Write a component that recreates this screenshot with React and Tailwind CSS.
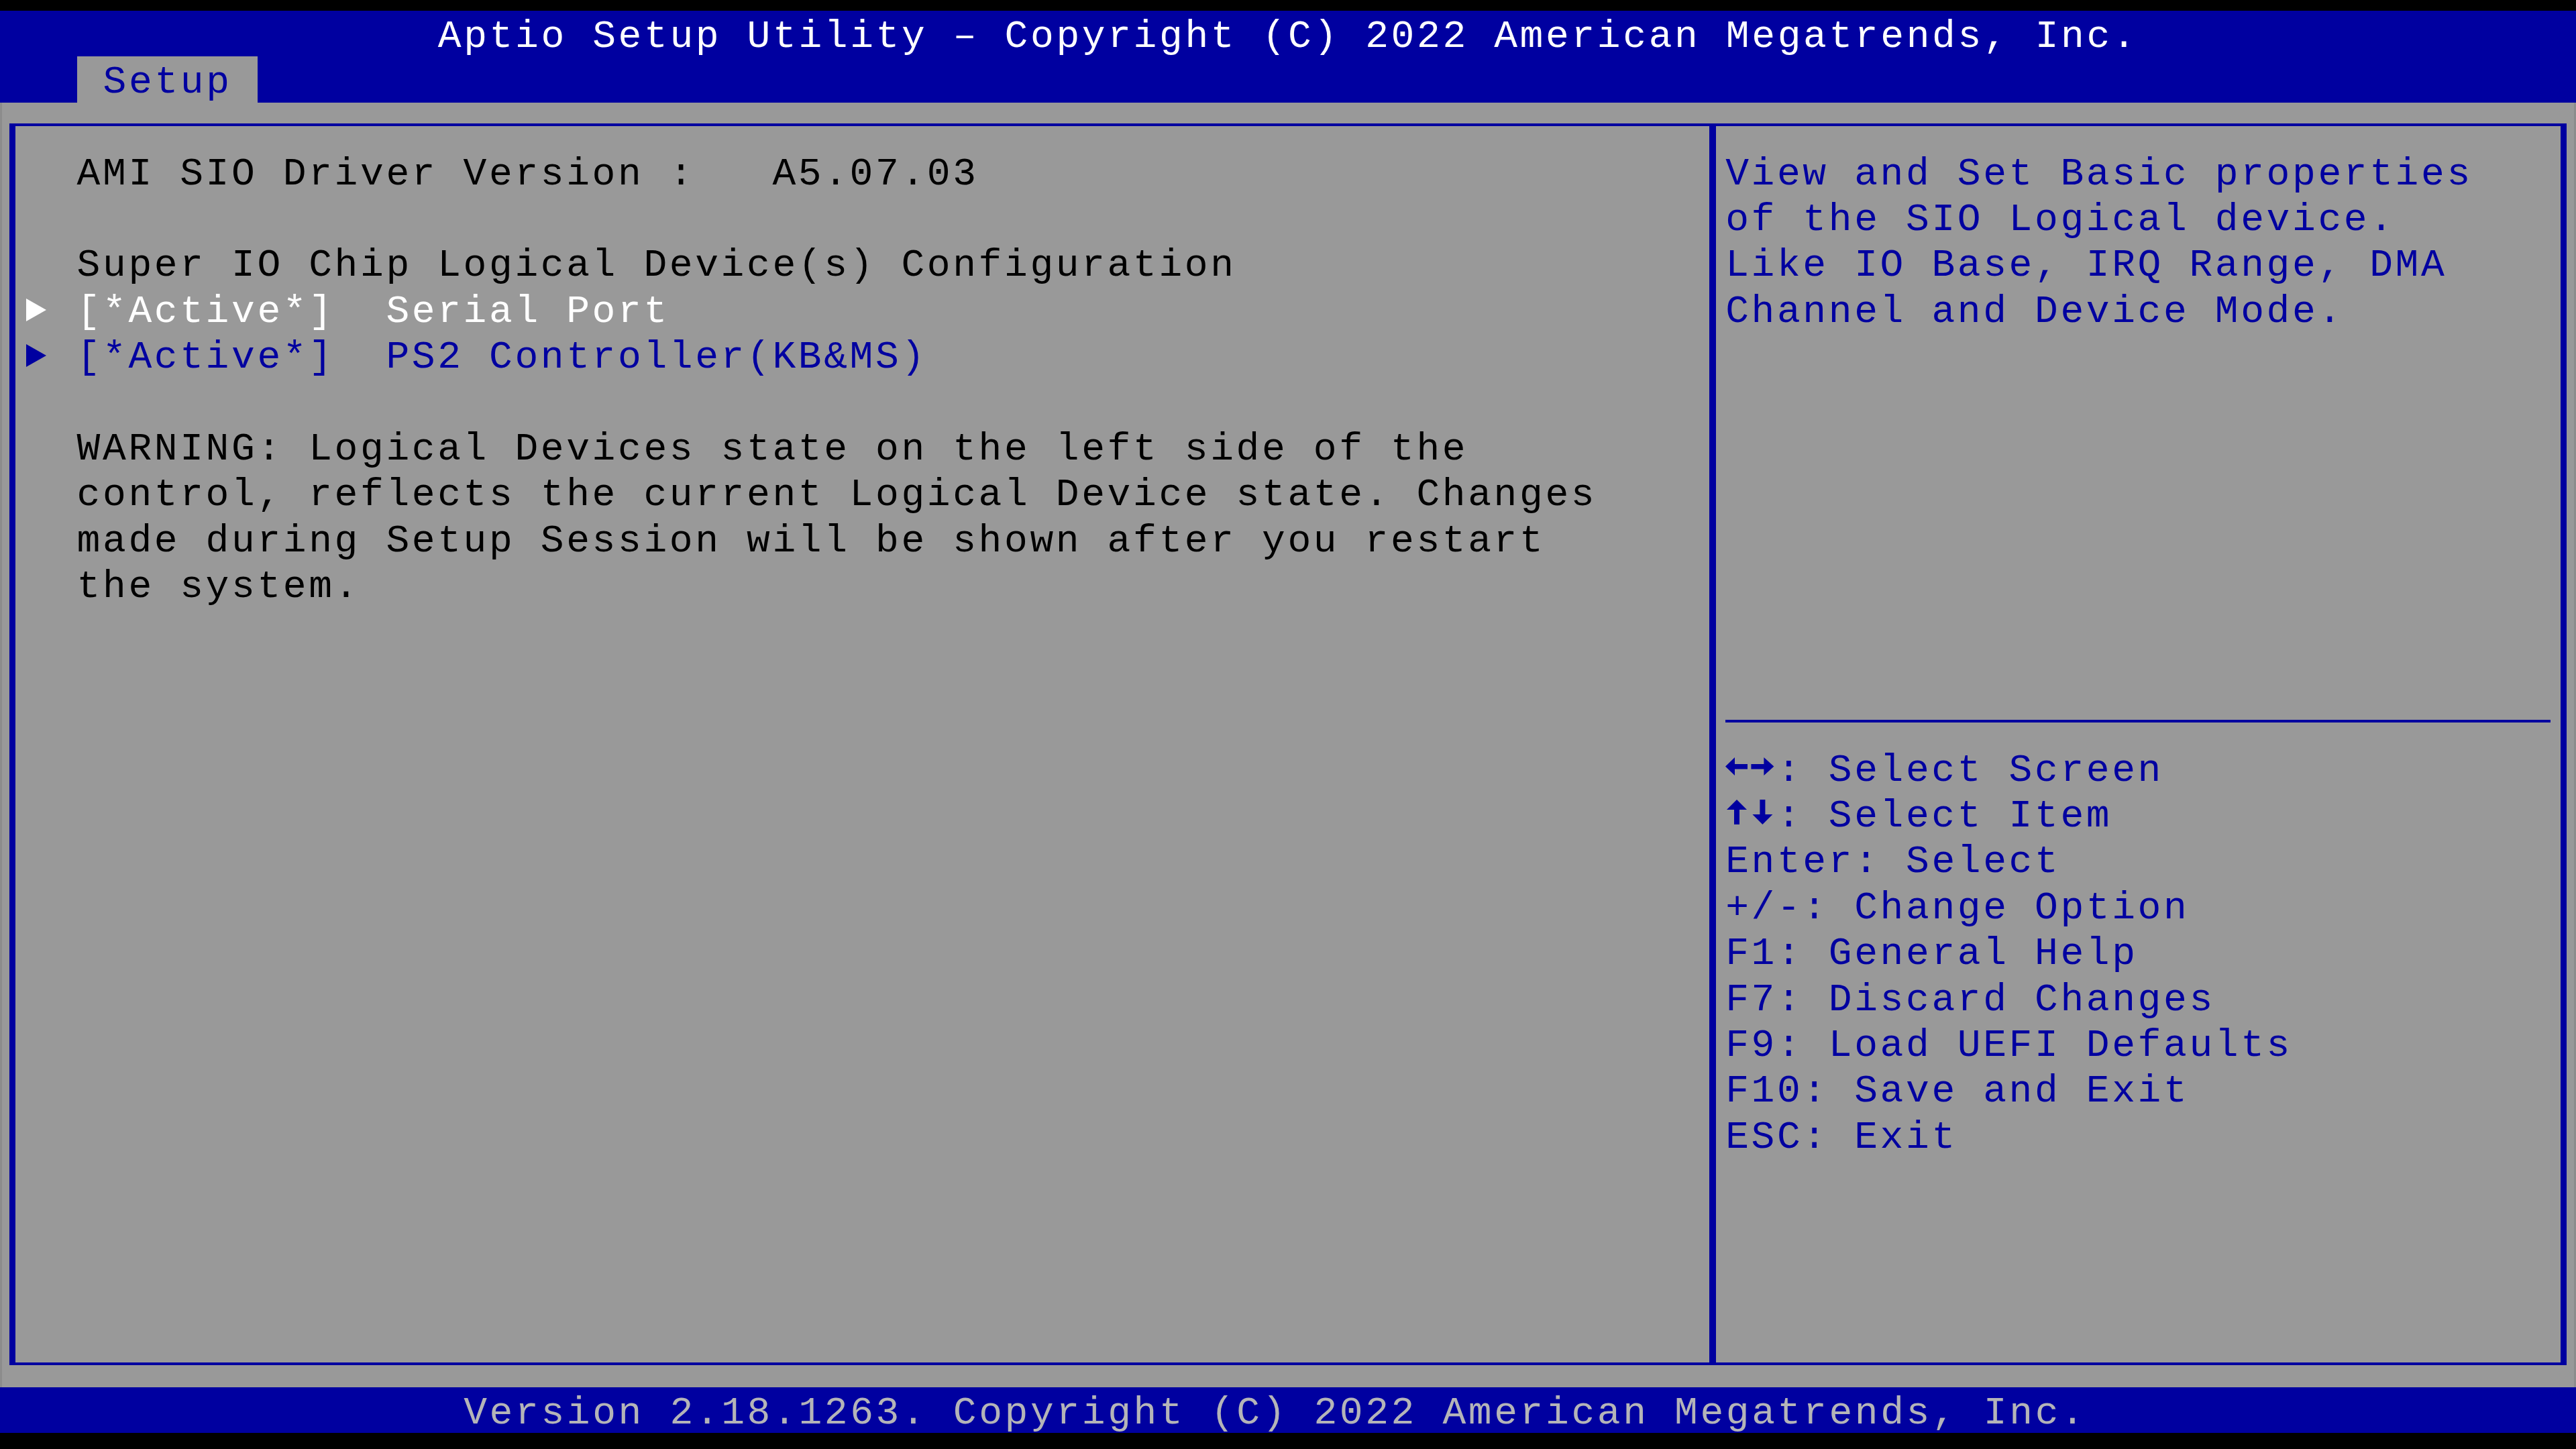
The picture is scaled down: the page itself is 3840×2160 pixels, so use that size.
import React from 'react';

// Aptio text-mode setup screen: 100 columns x 31 rows, each cell 38.4 x 68.4 px
const leftLines = [
  { text: 'AMI SIO Driver Version :   A5.07.03' },
  { text: '' },
  { text: 'Super IO Chip Logical Device(s) Configuration' },
  { text: '[*Active*]  Serial Port', marker: 'white' },
  { text: '[*Active*]  PS2 Controller(KB&MS)', marker: 'blue' },
  { text: '' },
  { text: 'WARNING: Logical Devices state on the left side of the' },
  { text: 'control, reflects the current Logical Device state. Changes' },
  { text: 'made during Setup Session will be shown after you restart' },
  { text: 'the system.' },
];

const helpText = [
  'View and Set Basic properties',
  'of the SIO Logical device.',
  'Like IO Base, IRQ Range, DMA',
  'Channel and Device Mode.',
];

const keyHelp = [
  { keys: 'lr', text: ': Select Screen' },
  { keys: 'ud', text: ': Select Item' },
  { text: 'Enter: Select' },
  { text: '+/-: Change Option' },
  { text: 'F1: General Help' },
  { text: 'F7: Discard Changes' },
  { text: 'F9: Load UEFI Defaults' },
  { text: 'F10: Save and Exit' },
  { text: 'ESC: Exit' },
];

function Text({ children, className = '' }) {
  return (
    <span className={`block pt-[8.7px] leading-[59.7px] whitespace-pre ${className}`}>{children}</span>
  );
}

function Line({ children, className = '' }) {
  return <div className={`flex h-[68.4px] ${className}`}>{children}</div>;
}

function Marker({ white }) {
  return (
    <svg width="76.8" height="68.4" viewBox="0 0 76.8 68.4" className="shrink-0">
      <polygon points="1,19 31,36 1,53" fill={white ? '#ffffff' : '#0000a0'} />
    </svg>
  );
}

function LeftRightArrows() {
  return (
    <svg width="76.8" height="68.4" viewBox="0 0 76.8 68.4" className="shrink-0">
      <g fill="#0000a0">
        <polygon points="0,32.6 14,19 14,46" />
        <rect x="13" y="29" width="20" height="7.5" />
        <rect x="38.4" y="29" width="20" height="7.5" />
        <polygon points="57.4,19 72.4,32.6 57.4,46" />
      </g>
    </svg>
  );
}

function UpDownArrows() {
  return (
    <svg width="76.8" height="68.4" viewBox="0 0 76.8 68.4" className="shrink-0">
      <g fill="#0000a0">
        <polygon points="2,29 17,14 32,29" />
        <rect x="13" y="28" width="8" height="23" />
        <rect x="51.4" y="14" width="8" height="23" />
        <polygon points="40.4,36 55.4,51 70.4,36" />
      </g>
    </svg>
  );
}

export default function App() {
  return (
    <div className="w-[3840px] h-[2160px] bg-black pt-[16px] font-['Liberation_Mono','DejaVu_Sans_Mono',monospace] text-[58px] tracking-[3.595px] antialiased">
      {/* title bar + tab row */}
      <div className="bg-[#0000a0]">
        <Line className="pl-[652.8px] text-white">
          <Text>Aptio Setup Utility – Copyright (C) 2022 American Megatrends, Inc.</Text>
        </Line>
        <Line className="pl-[115.2px]">
          <Text className="bg-[#999999] text-[#0000a0] w-[268.8px]"> Setup </Text>
        </Line>
      </div>

      {/* main area */}
      <div className="h-[1915.2px] bg-[#999999] border-x-[3px] border-[#8c8c8c] pt-[31.5px] px-[11.4px]">
        <div className="flex h-[1851.1px] border-x-[9.6px] border-y-[4.3px] border-[#0000a0]">
          <div className="w-[2524.8px] pt-[32.6px] pl-[14.4px] text-black">
            {leftLines.map((line, i) => (
              <Line
                key={i}
                className={line.marker === 'white' ? 'text-white' : line.marker === 'blue' ? 'text-[#0000a0]' : ''}
              >
                {line.marker ? <Marker white={line.marker === 'white'} /> : <div className="w-[76.8px] shrink-0" />}
                <Text>{line.text}</Text>
              </Line>
            ))}
          </div>

          <div className="w-[9.6px] bg-[#0000a0]" />

          <div className="flex-1 pt-[32.6px] px-[14.4px] text-[#0000a0]">
            {helpText.map((t) => (
              <Line key={t}>
                <Text>{t}</Text>
              </Line>
            ))}
            <div className="h-[547.2px]" />
            <div className="h-[68.4px] pt-[31.5px]">
              <div className="h-[4.3px] bg-[#0000a0]" />
            </div>
            {keyHelp.map((k) => (
              <Line key={k.text}>
                {k.keys === 'lr' && <LeftRightArrows />}
                {k.keys === 'ud' && <UpDownArrows />}
                <Text>{k.text}</Text>
              </Line>
            ))}
          </div>
        </div>
      </div>

      {/* status bar */}
      <div className="bg-[#0000a0]">
        <Line className="pl-[691.2px] text-[#b4b4b8]">
          <Text>Version 2.18.1263. Copyright (C) 2022 American Megatrends, Inc.</Text>
        </Line>
      </div>
    </div>
  );
}
